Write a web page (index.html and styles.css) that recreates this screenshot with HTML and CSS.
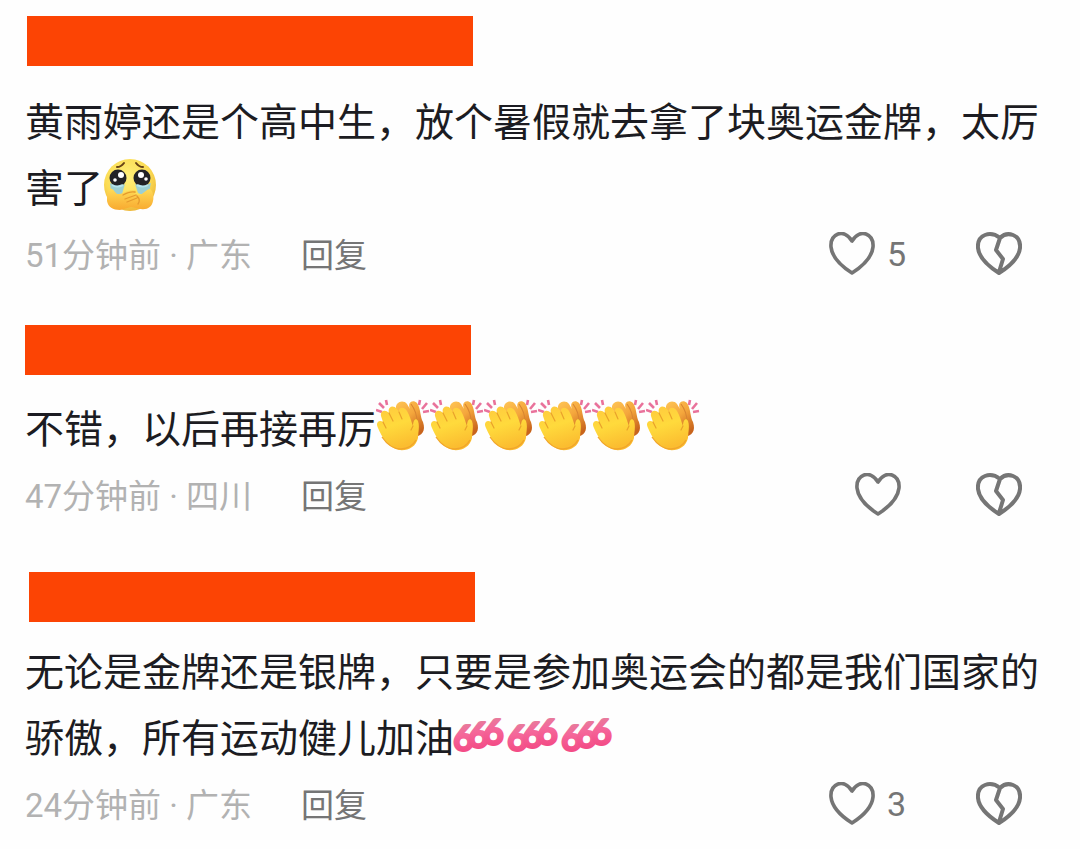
FILE: index.html
```html
<!DOCTYPE html>
<html lang="zh-CN">
<head>
<meta charset="utf-8">
<meta name="viewport" content="width=device-width, initial-scale=1">
<title>评论</title>
<link rel="stylesheet" href="styles.css">
</head>
<body>
<svg class="defs" aria-hidden="true">
  <defs>
    <radialGradient id="face" cx="45%" cy="35%" r="65%"><stop offset="0" stop-color="#fff07a"/><stop offset=".65" stop-color="#fbdc55"/><stop offset="1" stop-color="#eeb83a"/></radialGradient>
    <linearGradient id="palm" x1="0" y1="0" x2="0" y2="1"><stop offset="0" stop-color="#ffdc58"/><stop offset="1" stop-color="#f8a92f"/></linearGradient>
    <linearGradient id="hand" x1="0" y1="0" x2=".3" y2="1"><stop offset="0" stop-color="#ffc93f"/><stop offset=".5" stop-color="#ffda3c"/><stop offset="1" stop-color="#fbbd30"/></linearGradient>
    <linearGradient id="back" x1="0" y1="0" x2=".6" y2="1"><stop offset="0" stop-color="#ffc656"/><stop offset=".5" stop-color="#f4a63c"/><stop offset="1" stop-color="#c8641c"/></linearGradient>
    <linearGradient id="pink" x1="0" y1="0" x2="0" y2="1"><stop offset="0" stop-color="#dc8a9e"/><stop offset=".45" stop-color="#f5679a"/><stop offset="1" stop-color="#f23f7d"/></linearGradient>
  </defs>
  <symbol id="heart" viewBox="0 0 46 44">
    <path d="M23 9C19 2 13 .5 9 2C4 4 1.500 9 2 15C3 25 12 34 23 41C34 34 43 25 44 15C44.500 9 42 4 37 2C33 .5 27 2 23 9Z" fill="none" stroke="#757575" stroke-width="3.600" stroke-linejoin="round"/>
  </symbol>
  <symbol id="broken" viewBox="0 0 46 44">
    <path d="M24 6C19 2 13 1.500 9 3C4 5 1.500 10 2 16C3 26 12 34 23 41C34 34 43 26 44 16C44.500 10 42 5 37 3C33 1.500 28 2 24 6L20 18L27 27L23 40" fill="none" stroke="#757575" stroke-width="4" stroke-linejoin="round" stroke-linecap="round"/>
  </symbol>
  <symbol id="cry" viewBox="0 0 54 54">
    <circle cx="27" cy="27" r="26" fill="url(#face)"/>
    <path d="M14 9Q18 9 21 5M33 5Q36 9 40 9" fill="none" stroke="#674216" stroke-width="2" stroke-linecap="round"/>
    <path d="M7 25Q15 30 22 26L19 36Q13 39 8 34ZM32 26Q40 30 48 25L46 34Q40 38 35 35Z" fill="#9ccfd2"/>
    <circle cx="15" cy="20" r="8.500" fill="#222226"/><circle cx="39" cy="20" r="8.500" fill="#222226"/>
    <circle cx="18" cy="17" r="3" fill="#fff"/><circle cx="38" cy="17" r="3" fill="#fff"/>
    <circle cx="12" cy="22" r="1.800" fill="#fff"/><circle cx="43" cy="21" r="1.800" fill="#fff"/>
    <path d="M9 27Q14 30 20 27M34 27Q40 30 45 27" fill="none" stroke="#b5e4ee" stroke-width="2"/>
    <path d="M6 31C9 29 11 33 14 36C19 37 25 31 31 32C34 32 34 35 31 36L36 37C40 37 43 31 47 31C50 33 51 39 50 43C49 49 44 52 38 51L28 49L17 52C10 52 5 49 4 43C4 38 4 34 6 31Z" fill="url(#palm)"/>
    <path d="M20 37Q27 33 32 34M22 41L33 37M24 44L34 40M34 38Q38 42 35 46" fill="none" stroke="#e59a2d" stroke-width="1.300" stroke-linecap="round"/>
  </symbol>
  <symbol id="clap" viewBox="0 0 54 54">
    <path d="M0 11L6 13M3 4L8 9M10 1L11 6M43 6L44 1M46 10L51 4M47 13L53 12" stroke="#e9729b" stroke-width="2.600"/>
    <path d="M20 10C19 3 27 0 31 5L34 10C31 3 37 0 41 4C45 10 44 18 47 23C50 32 46 37 38 38L24 20Z" fill="url(#back)"/>
    <path d="M35 5Q41 13 41 23" fill="none" stroke="#d98632" stroke-width="1.200"/>
    <path d="M2 29C-1 24 3 20 7 23L5 17C4 12 9 10 13 14C11 8 17 5 21 10L23 13C22 8 28 7 31 12C34 17 35 22 37 27C37 21 40 18 42 22C44 27 42 34 42 39C40 48 32 52 23 51C12 49 6 38 2 29Z" fill="url(#hand)"/>
    <path d="M7 23L10 29M13 14L17 22M23 13L26 20M37 27L35 31" fill="none" stroke="#e9a22b" stroke-width="1.200" stroke-linecap="round"/>
    <path d="M6 38Q14 50 25 50Q36 49 40 41" fill="none" stroke="#f1a52b" stroke-width="1.300"/>
  </symbol>
</svg>
<main class="comments">
  <article class="comment">
    <div class="name name-first"></div>
    <p class="text">黄雨婷还是个高中生，放个暑假就去拿了块奥运金牌，太厉害了<svg class="emoji" role="img" aria-label="捂嘴哭"><use href="#cry"/></svg></p>
    <footer class="meta">
      <span class="info">51分钟前 · 广东</span>
      <button class="reply" type="button">回复</button>
      <button class="like" type="button" aria-label="赞 5"><svg class="icon"><use href="#heart"/></svg><span>5</span></button>
      <button class="dislike" type="button" aria-label="踩"><svg class="icon"><use href="#broken"/></svg></button>
    </footer>
  </article>
  <article class="comment">
    <div class="name name-second"></div>
    <p class="text">不错，以后再接再厉<svg class="emoji" role="img" aria-label="鼓掌"><use href="#clap"/></svg><svg class="emoji" role="img" aria-label="鼓掌"><use href="#clap"/></svg><svg class="emoji" role="img" aria-label="鼓掌"><use href="#clap"/></svg><svg class="emoji" role="img" aria-label="鼓掌"><use href="#clap"/></svg><svg class="emoji" role="img" aria-label="鼓掌"><use href="#clap"/></svg><svg class="emoji" role="img" aria-label="鼓掌"><use href="#clap"/></svg></p>
    <footer class="meta">
      <span class="info">47分钟前 · 四川</span>
      <button class="reply" type="button">回复</button>
      <button class="like like-empty" type="button" aria-label="赞"><svg class="icon"><use href="#heart"/></svg></button>
      <button class="dislike" type="button" aria-label="踩"><svg class="icon"><use href="#broken"/></svg></button>
    </footer>
  </article>
  <article class="comment">
    <div class="name name-third"></div>
    <p class="text">无论是金牌还是银牌，只要是参加奥运会的都是我们国家的骄傲，所有运动健儿加油<svg class="emoji sixes" viewBox="0 0 54 54" role="img" aria-label="666"><text x="-1" y="43">6</text><text x="14" y="40">6</text><text x="29" y="37">6</text></svg><svg class="emoji sixes" viewBox="0 0 54 54" role="img" aria-label="666"><text x="-1" y="43">6</text><text x="14" y="40">6</text><text x="29" y="37">6</text></svg><svg class="emoji sixes" viewBox="0 0 54 54" role="img" aria-label="666"><text x="-1" y="43">6</text><text x="14" y="40">6</text><text x="29" y="37">6</text></svg></p>
    <footer class="meta">
      <span class="info">24分钟前 · 广东</span>
      <button class="reply" type="button">回复</button>
      <button class="like" type="button" aria-label="赞 3"><svg class="icon"><use href="#heart"/></svg><span>3</span></button>
      <button class="dislike" type="button" aria-label="踩"><svg class="icon"><use href="#broken"/></svg></button>
    </footer>
  </article>
</main>
</body>
</html>
```
FILE: styles.css
```css
* { box-sizing: border-box; }

body {
  margin: 0;
  background: #fefefe;
  color: #1c1c22;
  font-family: Roboto, "Noto Sans CJK SC", sans-serif;
}

.defs {
  position: absolute;
  width: 0;
  height: 0;
}

.comments { padding: 16px 28px 0 25px; }

.name {
  width: 446px;
  max-width: 100%;
  height: 50px;
  background: #fc4404;
}

.name-first { margin: 0 0 20px 2px; }
.name-second { margin: 38px 0 18px; }
.name-third { margin: 44px 0 14px 4px; }

.text {
  margin: 0 0 3px;
  font-family: "Noto Sans CJK SC", sans-serif;
  font-size: 39px;
  line-height: 66px;
}

.emoji {
  width: 54px;
  height: 54px;
  margin-top: 6px;
  vertical-align: top;
  overflow: visible;
}

.sixes {
  font-family: Lato, sans-serif;
  font-size: 36px;
  font-weight: 700;
  fill: url(#pink);
  stroke: url(#pink);
  stroke-width: 2px;
  stroke-linejoin: round;
}

.meta {
  display: flex;
  align-items: center;
  height: 66px;
  padding-right: 30px;
  font-size: 33px;
  line-height: 48px;
  color: #757575;
}

.info,
.reply { padding-top: 4px; }

.info { color: #b2b2b2; }

button {
  display: flex;
  align-items: center;
  padding: 0;
  border: 0;
  background: none;
  color: inherit;
  font: inherit;
  cursor: pointer;
}

.meta .reply {
  margin-left: 49px;
  padding-top: 4px;
}

.like {
  gap: 12px;
  margin-left: auto;
  margin-right: 70px;
  font-size: 34px;
}

.like-empty { margin-right: 75px; }

.icon {
  width: 46px;
  height: 44px;
}
```
